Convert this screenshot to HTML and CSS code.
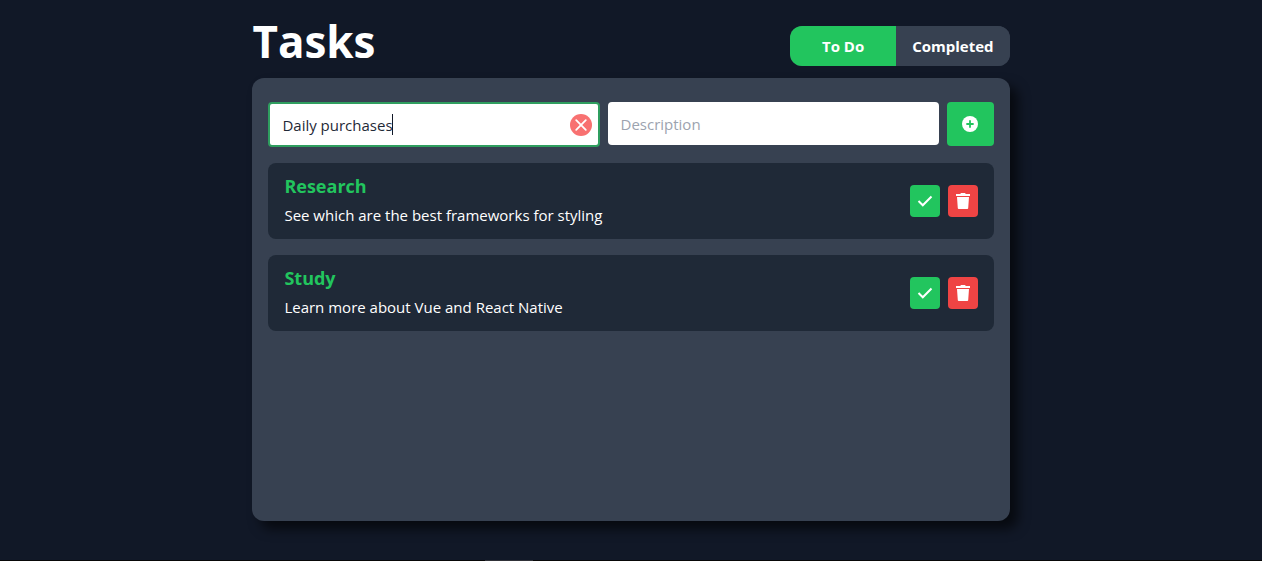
FILE: index.html
```html
<!DOCTYPE html>
<html lang="en">
<head>
  <meta charset="utf-8">
  <meta name="viewport" content="width=device-width, initial-scale=1">
  <title>Tasks</title>
  <link rel="stylesheet" href="styles.css">
</head>
<body>
  <main class="app">
    <header class="header">
      <h1 class="title">Tasks</h1>
      <nav class="tabs" aria-label="Task lists">
        <button class="tab tab-active" type="button" aria-pressed="true">To Do</button>
        <button class="tab" type="button" aria-pressed="false">Completed</button>
      </nav>
    </header>
    <section class="panel">
      <form class="form">
        <div class="field field-focused">
          <input class="input" type="text" value="Daily purchases" aria-label="Task name">
          <span class="caret"></span>
          <button class="clear" type="button" aria-label="Clear">
            <svg viewBox="0 0 22 22" width="22" height="22"><circle cx="11" cy="11" r="11" fill="#f87171"/><path d="M6.2 6.2l9.6 9.6M15.8 6.2l-9.6 9.6" fill="none" stroke="#fff" stroke-width="1.8" stroke-linecap="round"/></svg>
          </button>
        </div>
        <div class="field">
          <input class="input" type="text" placeholder="Description" aria-label="Description">
        </div>
        <button class="add" type="submit" aria-label="Add task">
          <svg viewBox="0 0 16 16" width="16" height="16"><circle cx="8" cy="8" r="8" fill="#fff"/><path d="M8 5v6M5 8h6" fill="none" stroke="#22c55e" stroke-width="1.8" stroke-linecap="round"/></svg>
        </button>
      </form>
      <ul class="list">
        <li class="task">
          <div class="task-text">
            <h2 class="task-title">Research</h2>
            <p class="task-note">See which are the best frameworks for styling</p>
          </div>
          <button class="action done" type="button" aria-label="Complete Research">
            <svg viewBox="0 0 16 16" width="16" height="16"><path d="M1.5 8l4.3 4.3L14.5 3.5" fill="none" stroke="#fff" stroke-width="2"/></svg>
          </button>
          <button class="action remove" type="button" aria-label="Delete Research">
            <svg viewBox="0 0 16 18" width="16" height="18"><path d="M1 2h4.2L6 1h4l.8 1H15v2H1zM2 5h12l-.8 11.2q-.1.8-.9.8H3.7q-.8 0-.9-.8z" fill="#fff"/></svg>
          </button>
        </li>
        <li class="task">
          <div class="task-text">
            <h2 class="task-title">Study</h2>
            <p class="task-note">Learn more about Vue and React Native</p>
          </div>
          <button class="action done" type="button" aria-label="Complete Study">
            <svg viewBox="0 0 16 16" width="16" height="16"><path d="M1.5 8l4.3 4.3L14.5 3.5" fill="none" stroke="#fff" stroke-width="2"/></svg>
          </button>
          <button class="action remove" type="button" aria-label="Delete Study">
            <svg viewBox="0 0 16 18" width="16" height="18"><path d="M1 2h4.2L6 1h4l.8 1H15v2H1zM2 5h12l-.8 11.2q-.1.8-.9.8H3.7q-.8 0-.9-.8z" fill="#fff"/></svg>
          </button>
        </li>
      </ul>
    </section>
  </main>
  <footer class="edge"><div class="edge-mark"></div></footer>
</body>
</html>
```
FILE: styles.css
```css
* {
  box-sizing: border-box;
  margin: 0;
  padding: 0;
}

body {
  display: flex;
  flex-direction: column;
  min-height: 100vh;
  background: #111827;
  color: #fff;
  font: 15px/24px "Segoe UI", "Open Sans", "Noto Sans", sans-serif;
}

button,
input {
  font: inherit;
  color: inherit;
  border: 0;
}

button {
  cursor: pointer;
}

svg {
  display: block;
}

.app {
  display: flex;
  flex: 1;
  flex-direction: column;
  width: 60%;
  margin: 0 auto;
  padding: 16px 0 39px;
}

.header {
  display: flex;
  align-items: flex-end;
  justify-content: space-between;
  padding-bottom: 12px;
}

.title {
  font-size: 44px;
  line-height: 50px;
  font-weight: 700;
}

.tabs {
  display: flex;
  overflow: hidden;
  border-radius: 12px;
  background: #374151;
}

.tab {
  padding: 8px 16px;
  background: #374151;
  font-weight: 700;
}

.tab-active {
  padding: 8px 32px;
  background: #22c55e;
}

.panel {
  flex: 1;
  padding: 24px 16px;
  border-radius: 12px;
  background: #374151;
  box-shadow: 8px 8px 12px rgba(0, 0, 0, 0.6);
}

.form {
  display: grid;
  grid-template-columns: 1fr 1fr auto;
  align-items: start;
  gap: 8px;
}

.field {
  position: relative;
  display: flex;
  align-items: center;
  height: 43px;
  padding: 0 13px;
  border-radius: 4px;
  background: #fff;
  color: #1f2937;
}

.field-focused {
  height: 45px;
  padding: 0 6px 0 12px;
  border: 2px solid #2f9e5f;
}

.input {
  flex: 1;
  min-width: 0;
  background: transparent;
  outline: none;
}

.input::placeholder {
  color: #9ca3af;
  opacity: 1;
}

.caret {
  position: absolute;
  left: 122px;
  top: 10px;
  width: 1px;
  height: 21px;
  background: #111827;
}

.clear {
  border-radius: 50%;
  background: transparent;
}

.add {
  display: grid;
  place-items: center;
  width: 47px;
  height: 44px;
  border-radius: 4px;
  background: #22c55e;
}

.list {
  display: flex;
  flex-direction: column;
  gap: 16px;
  margin-top: 16px;
  list-style: none;
}

.task {
  display: flex;
  align-items: center;
  gap: 8px;
  padding: 8px 16px;
  border-radius: 8px;
  background: #1f2937;
}

.task-text {
  flex: 1;
}

.task-title {
  color: #22c55e;
  font-size: 18px;
  line-height: 30px;
  font-weight: 700;
}

.task-note {
  padding: 2px 0 4px;
}

.action {
  display: grid;
  place-items: center;
  width: 30px;
  height: 32px;
  border-radius: 4px;
}

.done {
  background: #22c55e;
}

.remove {
  background: #ef4444;
}

.edge {
  height: 1px;
  background: #080808;
}

.edge-mark {
  width: 48px;
  height: 1px;
  margin-left: 38.4%;
  background: #303238;
}
```
